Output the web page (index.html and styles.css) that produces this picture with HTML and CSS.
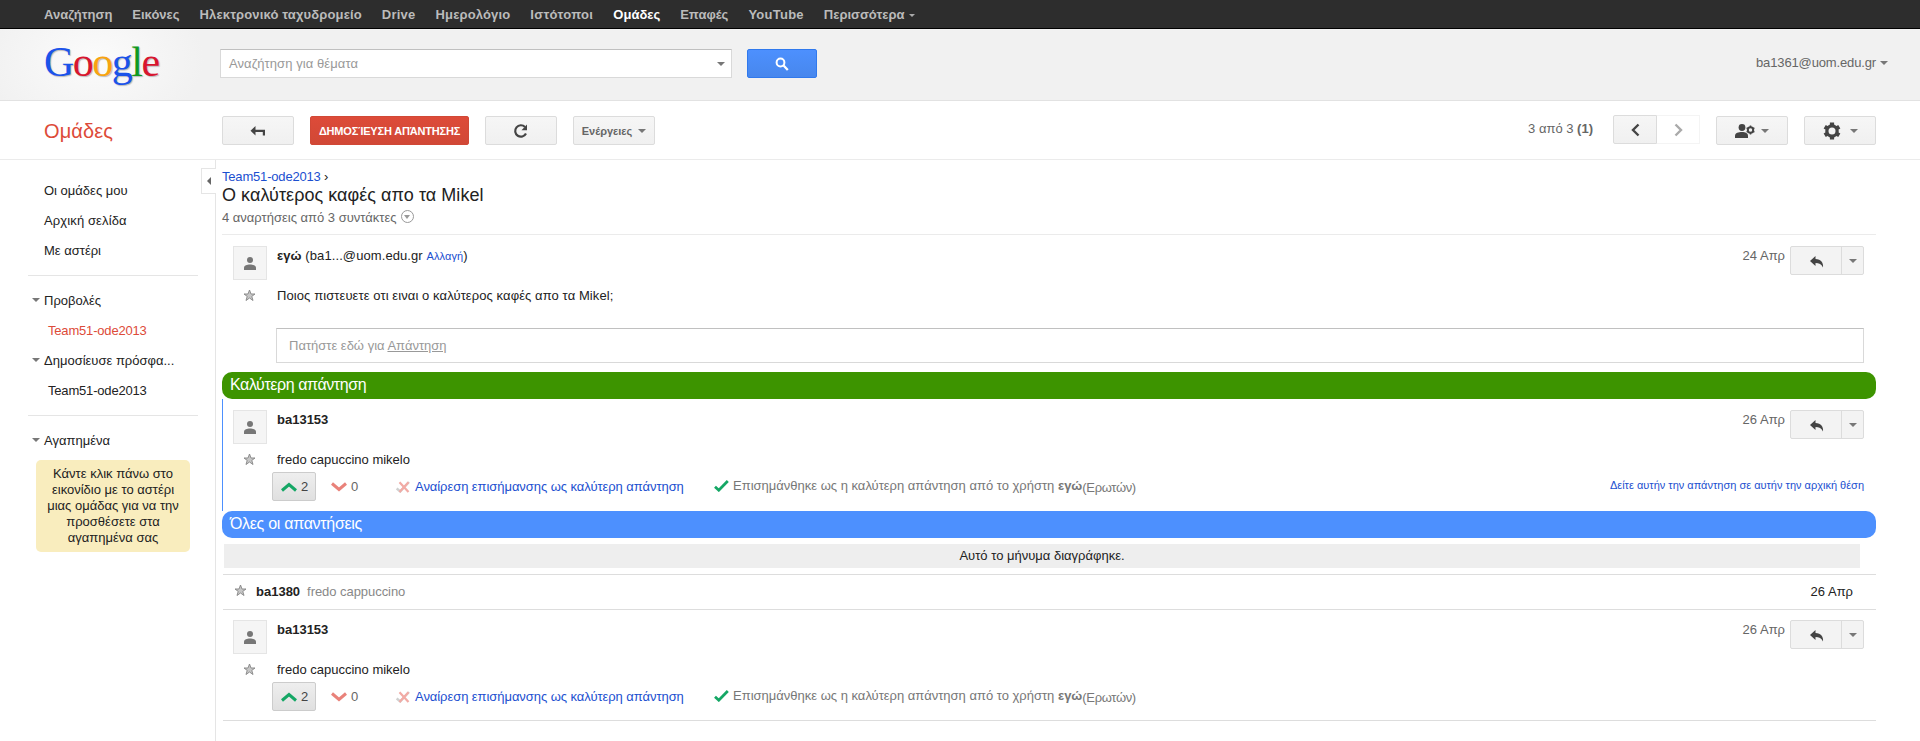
FILE: index.html
```html
<!DOCTYPE html>
<html lang="el">
<head>
<meta charset="utf-8">
<title>Ομάδες Google</title>
<link rel="stylesheet" href="styles.css">
</head>
<body>
<svg class="defs" width="0" height="0">
  <symbol id="person" viewBox="0 0 12 13"><circle cx="6" cy="3" r="3"/><path d="M0 13v-2.200C0 8.600 3 7.500 6 7.500s6 1.100 6 3.300V13z"/></symbol>
  <symbol id="star" viewBox="0 0 13 13"><path d="M6.500 1l1.500 4H12L8.800 7.400 10 11.500 6.500 9 3 11.500 4.200 7.400 1 5h4z" fill="#c6c6c6" stroke="#858585" stroke-width=".9"/></symbol>
  <symbol id="reply" viewBox="0 0 14 12"><path d="M5.500 0L0 5l5.500 5V7c3.500 0 6.300 1.200 7.500 4.500C13.500 6.500 11 3.500 5.500 3z"/></symbol>
  <symbol id="up" viewBox="0 0 16 10"><path d="M1 8.500L8 2.500l7 6" fill="none" stroke="#15a765" stroke-width="3"/></symbol>
  <symbol id="down" viewBox="0 0 16 10"><path d="M1 1.500L8 7.500l7-6" fill="none" stroke="#e9827a" stroke-width="3"/></symbol>
  <symbol id="unmark" viewBox="0 0 14 12"><path d="M.7 7.500l3.500 3L13 1" fill="none" stroke="#d0d0d0" stroke-width="2.400"/><path d="M3.500 1.200l9 9.800M12.500 1.200l-9 9.800" fill="none" stroke="#f2aba5" stroke-width="2.200"/></symbol>
  <symbol id="check" viewBox="0 0 15 12"><path d="M1 6.800l3.800 3.400L13.800 1" fill="none" stroke="#15a765" stroke-width="2.800"/></symbol>
</svg>

<nav class="topbar">
  <a>Αναζήτηση</a><a>Εικόνες</a><a class="ls1">Ηλεκτρονικό ταχυδρομείο</a><a class="ls2">Drive</a><a class="ls1">Ημερολόγιο</a><a class="ls3">Ιστότοποι</a><a class="current">Ομάδες</a><a>Επαφές</a><a class="ls2">YouTube</a><a>Περισσότερα</a><i class="caret caret-nav"></i>
</nav>

<header class="header">
  <div class="logo"><span class="b">G</span><span class="r">o</span><span class="y">o</span><span class="b">g</span><span class="g">l</span><span class="r">e</span></div>
  <div class="search"><span>Αναζήτηση για θέματα</span><i class="caret caret-search"></i></div>
  <button class="search-btn"><svg width="14" height="14" viewBox="0 0 14 14"><circle cx="5.500" cy="5.500" r="3.900" fill="none" stroke="#fff" stroke-width="2"/><path d="M8.300 8.300l4.500 4.700" stroke="#fff" stroke-width="2.300"/></svg></button>
  <div class="account"><span>ba1361@uom.edu.gr</span><i class="caret"></i></div>
</header>

<div class="toolbar">
  <div class="product">Ομάδες</div>
  <button class="btn w72"><svg width="16" height="10" viewBox="0 0 16 10"><path d="M5.500 0v3.700H15V9.500h-2.200V6H5.500v3.600L.5 4.800z" fill="#444"/></svg></button>
  <button class="btn primary">ΔΗΜΟΣΊΕΥΣΗ ΑΠΆΝΤΗΣΗΣ</button>
  <button class="btn w72"><svg width="16" height="16" viewBox="0 0 16 16"><path d="M13 10.500A5.700 5.700 0 1 1 12 4" fill="none" stroke="#444" stroke-width="2.200"/><path d="M14 1.500v5.700H8.500z" fill="#444"/></svg></button>
  <button class="btn actions"><span>Ενέργειες</span><i class="caret"></i></button>
  <div class="count">3 από 3 <b>(1)</b></div>
  <div class="pager">
    <button class="btn prev"><svg width="9" height="14" viewBox="0 0 9 14"><path d="M7.500 1.500L2 7l5.500 5.500" fill="none" stroke="#444" stroke-width="2.400"/></svg></button>
    <button class="next"><svg width="9" height="14" viewBox="0 0 9 14"><path d="M1.500 1.500L7 7l-5.500 5.500" fill="none" stroke="#aaa" stroke-width="2.400"/></svg></button>
  </div>
  <button class="btn w72 members"><svg width="20" height="14" viewBox="0 0 20 14"><circle cx="7" cy="3.500" r="3.400" fill="#444"/><path d="M0 14v-2.200C0 9 3.500 8 7 8s6 1.200 6 3.800V14z" fill="#444"/><circle cx="15.500" cy="6" r="2.700" fill="none" stroke="#444" stroke-width="2"/><path d="M15.500 1.500v9M11.600 3.800l7.800 4.400M19.400 3.800l-7.800 4.400" stroke="#444" stroke-width="1.500"/><circle cx="15.500" cy="6" r="1.700" fill="#f3f3f3"/></svg><i class="caret"></i></button>
  <button class="btn w72 settings"><svg width="18" height="18" viewBox="0 0 18 18"><path d="M9 .5v17M1.700 4.700l14.600 8.600M16.300 4.700L1.700 13.300" stroke="#444" stroke-width="4.200"/><circle cx="9" cy="9" r="5" fill="none" stroke="#444" stroke-width="3.600"/><circle cx="9" cy="9" r="3.500" fill="#f3f3f3"/></svg><i class="caret"></i></button>
</div>

<div class="page">
  <aside class="side">
    <a class="item">Οι ομάδες μου</a>
    <a class="item wide">Αρχική σελίδα</a>
    <a class="item">Με αστέρι</a>
    <hr>
    <div class="group"><i class="caret"></i>Προβολές</div>
    <a class="item sub active">Team51-ode2013</a>
    <div class="group"><i class="caret"></i>Δημοσίευσε πρόσφα...</div>
    <a class="item sub">Team51-ode2013</a>
    <hr>
    <div class="group"><i class="caret"></i>Αγαπημένα</div>
    <div class="tip">Κάντε κλικ πάνω στο<br>εικονίδιο με το αστέρι<br>μιας ομάδας για να την<br>προσθέσετε στα<br>αγαπημένα σας</div>
    <div class="toggle"><i></i></div>
  </aside>

  <main class="main">
    <div class="crumb"><a>Team51-ode2013</a> ›</div>
    <h1>Ο καλύτερος καφές απο τα Mikel</h1>
    <div class="meta"><span>4 αναρτήσεις από 3 συντάκτες</span><span class="round"><i class="caret"></i></span></div>

    <article class="post first">
      <div class="left"><div class="avatar"><svg width="12" height="13"><use href="#person"/></svg></div><svg class="star" width="13" height="13"><use href="#star"/></svg></div>
      <div class="body">
        <div class="name me"><b>εγώ</b> (ba1...@uom.edu.gr <a>Αλλαγή</a>)</div>
        <div class="text question">Ποιος πιστευετε οτι ειναι ο καλύτερος καφές απο τα Mikel;</div>
        <div class="reply-box">Πατήστε εδώ για <u>Απάντηση</u></div>
      </div>
      <div class="tools"><span class="date">24 Απρ</span><div class="split"><button><svg width="14" height="12"><use href="#reply"/></svg></button><button><i class="caret"></i></button></div></div>
    </article>

    <h2 class="green">Καλύτερη απάντηση</h2>
    <article class="post best">
      <div class="left"><div class="avatar"><svg width="12" height="13"><use href="#person"/></svg></div><svg class="star" width="13" height="13"><use href="#star"/></svg></div>
      <div class="body">
        <div class="name"><b>ba13153</b></div>
        <div class="text">fredo capuccino mikelo</div>
        <div class="votes">
          <span class="vote-up"><svg width="16" height="10"><use href="#up"/></svg>2</span>
          <span class="vote-down"><svg width="16" height="10"><use href="#down"/></svg>0</span>
          <a class="unmark"><svg width="14" height="12"><use href="#unmark"/></svg><span>Αναίρεση επισήμανσης ως καλύτερη απάντηση</span></a>
          <span class="marked"><svg width="15" height="12"><use href="#check"/></svg><span>Επισημάνθηκε ως η καλύτερη απάντηση από το χρήστη <b>εγώ</b></span><span class="asker">(Ερωτών)</span></span>
          <a class="jump">Δείτε αυτήν την απάντηση σε αυτήν την αρχική θέση</a>
        </div>
      </div>
      <div class="tools"><span class="date">26 Απρ</span><div class="split"><button><svg width="14" height="12"><use href="#reply"/></svg></button><button><i class="caret"></i></button></div></div>
    </article>

    <h2 class="blue">Όλες οι απαντήσεις</h2>
    <div class="deleted">Αυτό το μήνυμα διαγράφηκε.</div>
    <div class="collapsed"><svg class="star" width="13" height="13"><use href="#star"/></svg><b>ba1380</b><span class="snippet">fredo cappuccino</span><span class="date">26 Απρ</span></div>
    <article class="post last">
      <div class="left"><div class="avatar"><svg width="12" height="13"><use href="#person"/></svg></div><svg class="star" width="13" height="13"><use href="#star"/></svg></div>
      <div class="body">
        <div class="name"><b>ba13153</b></div>
        <div class="text">fredo capuccino mikelo</div>
        <div class="votes">
          <span class="vote-up"><svg width="16" height="10"><use href="#up"/></svg>2</span>
          <span class="vote-down"><svg width="16" height="10"><use href="#down"/></svg>0</span>
          <a class="unmark"><svg width="14" height="12"><use href="#unmark"/></svg><span>Αναίρεση επισήμανσης ως καλύτερη απάντηση</span></a>
          <span class="marked"><svg width="15" height="12"><use href="#check"/></svg><span>Επισημάνθηκε ως η καλύτερη απάντηση από το χρήστη <b>εγώ</b></span><span class="asker">(Ερωτών)</span></span>
        </div>
      </div>
      <div class="tools"><span class="date">26 Απρ</span><div class="split"><button><svg width="14" height="12"><use href="#reply"/></svg></button><button><i class="caret"></i></button></div></div>
    </article>
  </main>
</div>
</body>
</html>
```
FILE: styles.css
```css
* { box-sizing: border-box; }
body { margin: 0; height: 741px; overflow: hidden; background: #fff; color: #222; font: 13px/16px "Liberation Sans", Arial, sans-serif; }
button { margin: 0; padding: 0; border: 0; background: none; font: inherit; color: inherit; display: flex; align-items: center; justify-content: center; }
svg { display: block; flex: none; }
a { color: inherit; }
.defs { position: absolute; }

.caret { flex: none; width: 0; height: 0; border: 4px solid transparent; border-bottom-width: 0; border-top-color: #777; }
.topbar .caret-nav { border-width: 3px 3px 0; border-top-color: #aaa; margin: 2px 0 0 -15px; }

.topbar { height: 29px; padding: 1px 0 0 44px; display: flex; align-items: center; background: #2d2d2d; border-bottom: 1px solid #000; color: #bbb; font-weight: bold; }
.topbar a { margin-right: 20px; }
.topbar .current { color: #fff; }
.ls1 { letter-spacing: .14px; }
.ls2 { letter-spacing: .25px; }
.ls3 { letter-spacing: .33px; }

.header { height: 72px; display: flex; align-items: flex-start; background: radial-gradient(ellipse 110px 75px at 94px 30px, #fbfbfb, #f1f1f1); border-bottom: 1px solid #e2e2e2; padding: 20px 32px 0 44px; }
.logo { width: 176px; margin-top: -12px; font: 42px/50px "Liberation Serif", serif; letter-spacing: -1.500px; text-shadow: 1px 1px 1px #bbb; }
.logo .b { color: #1b53ea; }
.logo .r { color: #d8162f; }
.logo .y { color: #f8a410; }
.logo .g { color: #109a20; }
.search { width: 512px; height: 29px; display: flex; align-items: center; justify-content: space-between; padding: 0 6px 0 8px; background: #fff; border: 1px solid #d9d9d9; border-top-color: #c0c0c0; color: #999; letter-spacing: .08px; }
.search-btn { width: 70px; height: 29px; margin-left: 15px; border: 1px solid #3079ed; border-radius: 2px; background: linear-gradient(#4d90fe, #4787ed); }
.account { margin-left: auto; height: 27px; display: flex; align-items: center; gap: 4px; color: #666; letter-spacing: -.14px; }

.toolbar { height: 59px; display: flex; align-items: flex-start; padding: 15px 44px 0; border-bottom: 1px solid #ebebeb; }
.product { width: 178px; font-size: 20px; line-height: 30px; letter-spacing: .1px; color: #dd4b39; }
.btn { height: 29px; border: 1px solid #dcdcdc; border-radius: 2px; background: linear-gradient(#f6f6f6, #f0f0f0); color: #666; font-weight: bold; font-size: 11px; margin-right: 16px; }
.w72 { width: 72px; }
.primary { width: 159px; border-color: #d14836; background: linear-gradient(#dd4b39, #d14836); color: #fff; letter-spacing: -.18px; }
.actions { width: 82px; gap: 6px; }
.count { margin-left: auto; margin-right: 20px; line-height: 26px; color: #666; }
.pager { display: flex; margin: -1px 16px 0 0; }
.prev { width: 44px; margin: 0; border-radius: 2px 0 0 2px; }
.next { width: 43px; height: 29px; border: 1px solid #f4f4f4; border-left: 0; }
.members { gap: 6px; }
.settings { gap: 9px; margin-right: 0; }

.page { display: flex; height: 581px; }
.side { position: relative; width: 216px; padding: 16px 17px 0 28px; border-right: 1px solid #e5e5e5; }
.item, .group { display: flex; align-items: center; height: 30px; padding-left: 16px; }
.group { padding-left: 4px; white-space: nowrap; }
.group .caret { margin: -3px 4px 0 0; }
.wide { letter-spacing: .12px; }
.item.sub { padding-left: 20px; letter-spacing: -.18px; }
.active { color: #dd4b39; }
.side hr { height: 1px; margin: 9px 0 10px; border: 0; background: #e5e5e5; }
.tip { width: 154px; height: 92px; margin: 4px 0 0 8px; padding-top: 6px; text-align: center; background: #f9edbe; border-radius: 5px; }
.toggle { position: absolute; right: -1px; top: 8px; width: 15px; height: 26px; border: 1px solid #e5e5e5; border-right: 0; background: #fff; display: flex; align-items: center; justify-content: center; }
.toggle i { border: 4px solid transparent; border-left: 0; border-right-color: #666; }

.main { width: 1660px; padding: 9px 0 0 6px; }
.crumb { height: 16px; letter-spacing: -.18px; }
.crumb a, .name a, .unmark, .jump { color: #1b4fd0; }
h1 { margin: 0; font-weight: normal; font-size: 18px; line-height: 20px; height: 22px; letter-spacing: .05px; }
.meta { display: flex; gap: 4px; height: 28px; padding-top: 3px; border-bottom: 1px solid #ebebeb; color: #666; }
.round { width: 13px; height: 13px; border: 1px solid #999; border-radius: 50%; display: flex; align-items: center; justify-content: center; }
.round .caret { border-width: 4px 3.500px 0; border-top-color: #999; }

.post { position: relative; display: flex; padding: 11px 12px 0 11px; }
.first { height: 137px; }
.best { height: 112px; border-left: 1px solid #4d90fe; padding-left: 10px; }
.last { height: 111px; margin-left: 1px; padding: 10px 12px 0 10px; border-bottom: 1px solid #ddd; }
.left { width: 43px; flex: none; }
.avatar { width: 34px; height: 34px; display: flex; align-items: center; justify-content: center; background: #f5f5f5; border: 1px solid #e5e5e5; fill: #777; }
.left .star { margin: 9px 0 0 10px; }
.body { flex: 1; min-width: 0; padding-left: 1px; }
.name { height: 42px; padding-top: 2px; }
.name a { font-size: 11px; }
.me { letter-spacing: .09px; }
.text { height: 20px; }
.question { letter-spacing: .09px; }
.reply-box { width: 1588px; height: 35px; margin: 20px 0 0 -1px; padding: 0 12px; border: 1px solid #d9d9d9; border-top-color: #c0c0c0; color: #999; line-height: 33px; }
.tools { position: absolute; right: 12px; top: 11px; display: flex; gap: 5px; color: #666; }
.last .tools { top: 10px; }
.tools .date { padding-top: 2px; }
.split { display: flex; width: 74px; height: 29px; border: 1px solid #dcdcdc; border-radius: 2px; background: #f3f3f3; fill: #444; }
.split button { flex: 1; padding: 2px 0 0 2px; }
.split button + button { flex: none; width: 22px; border-left: 1px solid #dcdcdc; padding: 0; }

h2 { margin: 0; height: 27px; border-radius: 10px; padding-left: 8px; color: #fff; font-weight: normal; font-size: 16px; line-height: 26px; }
.green { background: #3d9400; letter-spacing: -.42px; }
.blue { background: #4d90fe; letter-spacing: -.3px; }

.votes { display: flex; align-items: center; height: 29px; margin-left: -5px; color: #666; }
.vote-up { display: flex; align-items: center; gap: 4px; width: 44px; height: 29px; padding-left: 8px; border: 1px solid #ccc; border-radius: 2px; background: linear-gradient(#eee, #e0e0e0); color: #444; }
.vote-down { display: flex; align-items: center; gap: 4px; width: 80px; padding-left: 15px; }
.unmark { display: flex; gap: 5px; width: 318px; letter-spacing: -.06px; }
.marked { display: flex; gap: 4px; color: #777; }
.unmark svg, .marked svg { margin-top: 2px; }
.asker { margin: 2px 0 0 -4px; letter-spacing: -.35px; }
.jump { margin-left: auto; font-size: 11px; padding-bottom: 3px; }

.deleted { height: 24px; margin: 6px 16px 6px 2px; background: #eee; text-align: center; line-height: 24px; }
.collapsed { display: flex; align-items: center; height: 36px; margin-left: 1px; border: 1px solid #ddd; border-width: 1px 0; padding: 0 23px 0 11px; }
.collapsed .star { margin: -3px 9px 0 0; }
.snippet { margin-left: 7px; letter-spacing: -.05px; color: #888; }
.collapsed .date { margin-left: auto; }
```
